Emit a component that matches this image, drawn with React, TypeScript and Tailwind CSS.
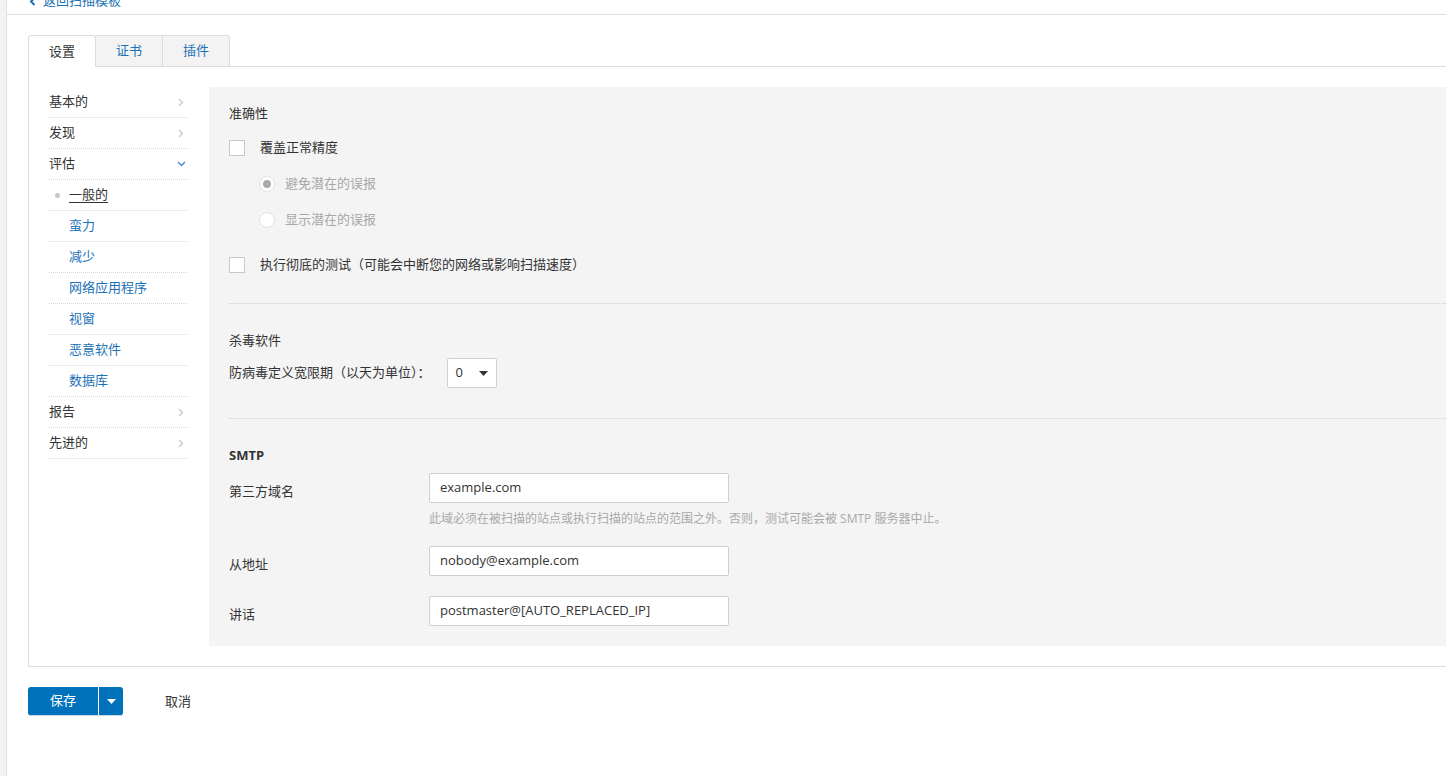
import React from "react";

const FONT = { fontFamily: '"Open Sans", "Noto Sans CJK SC", sans-serif' };

function ChevronRight() {
  return (
    <svg width="6" height="9" viewBox="0 0 6 9" className="text-[#c8c8c8]">
      <path d="M1 1 L4.5 4.5 L1 8" fill="none" stroke="currentColor" strokeWidth="1.3" />
    </svg>
  );
}
function ChevronDown() {
  return (
    <svg width="9" height="6" viewBox="0 0 9 6" className="text-[#3a87c8]">
      <path d="M1 1 L4.5 4.5 L8 1" fill="none" stroke="currentColor" strokeWidth="1.3" />
    </svg>
  );
}

const navTop = (label: string, open = false) => (
  <div className={`flex h-[31px] items-center justify-between border-b border-dotted border-[#d6d6d6] text-[#333] ${open ? "pr-[2px]" : "pr-[4px]"}`}>
    <span>{label}</span>
    {open ? <ChevronDown /> : <ChevronRight />}
  </div>
);

const navSub = (label: string, active = false) => (
  <div className="relative flex h-[31px] items-center border-b border-dotted border-[#d6d6d6] pl-[20px]">
    {active && <span className="absolute left-[6px] top-[13px] h-[5px] w-[5px] rounded-full bg-[#c8c8c8]" />}
    <span className={active ? "text-[#333] underline underline-offset-[3px]" : "text-[#1c72b8]"}>{label}</span>
  </div>
);

function Checkbox() {
  return <span className="inline-block h-[16px] w-[16px] shrink-0 border border-[#c9c9c9] bg-white" />;
}

function Radio({ checked }: { checked?: boolean }) {
  return (
    <span className="flex h-[16px] w-[16px] shrink-0 items-center justify-center rounded-full border border-[#e2e2e2] bg-white">
      {checked && <span className="h-[8px] w-[8px] rounded-full bg-[#a9a9a9]" />}
    </span>
  );
}

function TextInput({ value }: { value: string }) {
  return (
    <div className="flex h-[30px] w-[300px] items-center rounded-[2px] border border-[#cfcfcf] bg-white px-[10px] text-[#333]">
      {value}
    </div>
  );
}

export default function App() {
  return (
    <div className="flex h-[776px] w-[1446px] overflow-hidden bg-white text-[13px] text-[#333]" style={FONT}>
      <div className="w-[7px] shrink-0 border-r border-[#e0e0e0] bg-[#f3f3f3]" />
      <div className="flex min-w-0 flex-1 flex-col">
        {/* back link */}
        <div className="h-[15px] shrink-0 border-b border-[#dedede]">
          <div className="mt-[-8px] flex h-[18px] items-center pl-[22px] text-[#1c72b8]">
            <svg width="7" height="9" viewBox="0 0 7 9" className="mr-[7px]">
              <path d="M5.5 1 L2 4.5 L5.5 8" fill="none" stroke="currentColor" strokeWidth="2" />
            </svg>
            <span>返回扫描模板</span>
          </div>
        </div>

        {/* tabs */}
        <div className="mt-[20px] flex h-[32px] shrink-0 pl-[21px]">
          <div className="flex h-[32px] w-[68px] items-center justify-center rounded-t-[3px] border border-b-0 border-[#dcdcdc] bg-white text-[#333]">
            设置
          </div>
          <div className="flex h-[32px] w-[67px] items-center justify-center border-t border-r border-b border-[#dcdcdc] bg-[#f3f3f3] text-[#1c72b8]">
            证书
          </div>
          <div className="flex h-[32px] w-[67px] items-center justify-center rounded-tr-[3px] border-t border-r border-b border-[#dcdcdc] bg-[#f3f3f3] text-[#1c72b8]">
            插件
          </div>
          <div className="flex-1 border-b border-[#dcdcdc]" />
        </div>

        {/* panel */}
        <div className="ml-[21px] flex h-[600px] shrink-0 border-l border-b border-[#dcdcdc] pt-[20px] pb-[20px] pl-[20px]">
          {/* nav */}
          <div className="w-[139px] shrink-0">
            {navTop("基本的")}
            {navTop("发现")}
            {navTop("评估", true)}
            {navSub("一般的", true)}
            {navSub("蛮力")}
            {navSub("减少")}
            {navSub("网络应用程序")}
            {navSub("视窗")}
            {navSub("恶意软件")}
            {navSub("数据库")}
            {navTop("报告")}
            {navTop("先进的")}
          </div>

          {/* content */}
          <div className="ml-[21px] min-w-0 flex-1 bg-[#f4f4f4] pl-[20px] pt-[17px] pb-[20px]">
            <div className="flex h-[20px] items-center">准确性</div>
            <div className="mt-[14px] flex h-[20px] items-center">
              <Checkbox />
              <span className="ml-[15px]">覆盖正常精度</span>
            </div>
            <div className="mt-[16px] flex h-[20px] items-center pl-[30px] text-[#a8a8a8]">
              <Radio checked />
              <span className="ml-[10px]">避免潜在的误报</span>
            </div>
            <div className="mt-[16px] flex h-[20px] items-center pl-[30px] text-[#a8a8a8]">
              <Radio />
              <span className="ml-[10px]">显示潜在的误报</span>
            </div>
            <div className="mt-[25px] flex h-[20px] items-center">
              <Checkbox />
              <span className="ml-[15px]">执行彻底的测试（可能会中断您的网络或影响扫描速度）</span>
            </div>
            <div className="mt-[28px] border-t border-dotted border-[#cfcfcf]" />

            <div className="mt-[27px] flex h-[20px] items-center">杀毒软件</div>
            <div className="mt-[7px] flex h-[30px] items-center">
              <span>防病毒定义宽限期（以天为单位）：</span>
              <div className="ml-[16px] flex h-[30px] w-[50px] items-center rounded-[2px] border border-[#d0d0d0] bg-white pl-[8px]">
                <span>0</span>
                <svg width="9" height="5" viewBox="0 0 9 5" className="ml-[16px]">
                  <path d="M0 0 L9 0 L4.5 5 Z" fill="#333" />
                </svg>
              </div>
            </div>
            <div className="mt-[30px] border-t border-dotted border-[#cfcfcf]" />

            <div className="mt-[27px] flex h-[20px] items-center font-bold">SMTP</div>
            <div className="mt-[7px] flex items-start">
              <span className="w-[200px] shrink-0 pt-[9px] leading-[18px]">第三方域名</span>
              <TextInput value="example.com" />
            </div>
            <div className="mt-[7px] flex h-[18px] items-center pl-[200px] text-[12px] text-[#a9a9a9]">
              此域必须在被扫描的站点或执行扫描的站点的范围之外。否则，测试可能会被 SMTP 服务器中止。
            </div>
            <div className="mt-[18px] flex items-start">
              <span className="w-[200px] shrink-0 pt-[9px] leading-[18px]">从地址</span>
              <TextInput value="nobody@example.com" />
            </div>
            <div className="mt-[20px] flex items-start">
              <span className="w-[200px] shrink-0 pt-[9px] leading-[18px]">讲话</span>
              <TextInput value="postmaster@[AUTO_REPLACED_IP]" />
            </div>
          </div>
        </div>

        {/* buttons */}
        <div className="mt-[20px] flex items-center pl-[21px]">
          <div className="flex h-[29px] overflow-hidden rounded-[3px] border-b border-[#cfd8df] bg-[#0072bb] text-white">
            <div className="flex w-[70px] items-center justify-center">保存</div>
            <div className="w-px bg-white" />
            <div className="flex w-[24px] items-center justify-center">
              <svg width="9" height="5" viewBox="0 0 9 5">
                <path d="M0 0 L9 0 L4.5 5 Z" fill="#fff" />
              </svg>
            </div>
          </div>
          <span className="ml-[42px] text-[#333]">取消</span>
        </div>
      </div>
    </div>
  );
}
